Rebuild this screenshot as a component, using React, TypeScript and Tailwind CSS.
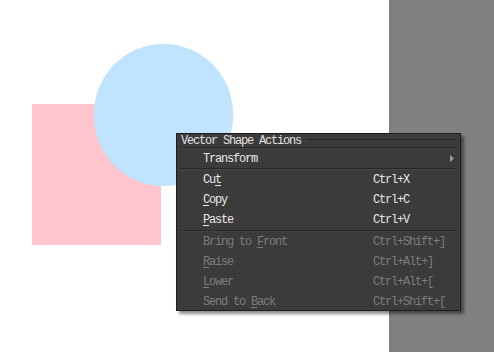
import React from "react";

type Item = { pre: string; u: string; post: string; sc: string; disabled?: boolean };

const group1: Item[] = [
  { pre: "Cu", u: "t", post: "", sc: "Ctrl+X" },
  { pre: "", u: "C", post: "opy", sc: "Ctrl+C" },
  { pre: "", u: "P", post: "aste", sc: "Ctrl+V" },
];
const group2: Item[] = [
  { pre: "Bring to ", u: "F", post: "ront", sc: "Ctrl+Shift+]", disabled: true },
  { pre: "", u: "R", post: "aise", sc: "Ctrl+Alt+]", disabled: true },
  { pre: "", u: "L", post: "ower", sc: "Ctrl+Alt+[", disabled: true },
  { pre: "Send to ", u: "B", post: "ack", sc: "Ctrl+Shift+[", disabled: true },
];

function Row({ it }: { it: Item }) {
  return (
    <div
      className={`flex h-[20px] items-center ${it.disabled ? "text-[#7c7c7c]" : "text-[#e6e6e6]"}`}
    >
      <div className="w-[196px] pl-[26px]">
        {it.pre}
        <span className="underline underline-offset-2">{it.u}</span>
        {it.post}
      </div>
      <div>{it.sc}</div>
    </div>
  );
}

function Sep() {
  return (
    <div className="mx-[4px] h-[2px] border-t border-[#262626] border-b border-b-[#454545]" />
  );
}

export default function App() {
  return (
    <div
      className="flex h-[352px] w-[494px] bg-white text-[12px] leading-[12px] tracking-[-1.2px]"
      style={{ fontFamily: '"Liberation Mono", monospace' }}
    >
      <div className="relative flex-1">
        <div className="absolute left-[32px] top-[104px] h-[141px] w-[129px] bg-[#ffc5cc]" />
        <div className="absolute left-[94px] top-[44px] h-[142px] w-[139px] rounded-full bg-[#c0e4ff]" />
        <div className="absolute left-[176px] top-[133px] z-10 h-[178px] w-[285px] border border-[#1e1e1e] bg-[#3b3b3b] shadow-[3px_3px_3px_rgba(0,0,0,0.45)]">
          <div className="flex h-[13px] items-center pl-[4px] pr-[4px] text-[#e0e0e0]">
            <span className="pr-[6px]">Vector Shape Actions</span>
            <div className="mt-[-3px] h-[1px] flex-1 bg-[#262626]" />
          </div>
          <Sep />
          <div className="relative flex h-[19px] items-center text-[#e6e6e6]">
            <div className="pl-[26px]">Transform</div>
            <svg
              className="absolute right-[6px] top-[6px]"
              width="4"
              height="7"
              viewBox="0 0 4 7"
            >
              <path d="M0 0 L4 3.5 L0 7 Z" fill="#9a9a9a" />
            </svg>
          </div>
          <Sep />
          {group1.map((it) => (
            <Row key={it.sc} it={it} />
          ))}
          <Sep />
          {group2.map((it) => (
            <Row key={it.sc} it={it} />
          ))}
        </div>
      </div>
      <div className="w-[105px] bg-[#808080]" />
    </div>
  );
}
